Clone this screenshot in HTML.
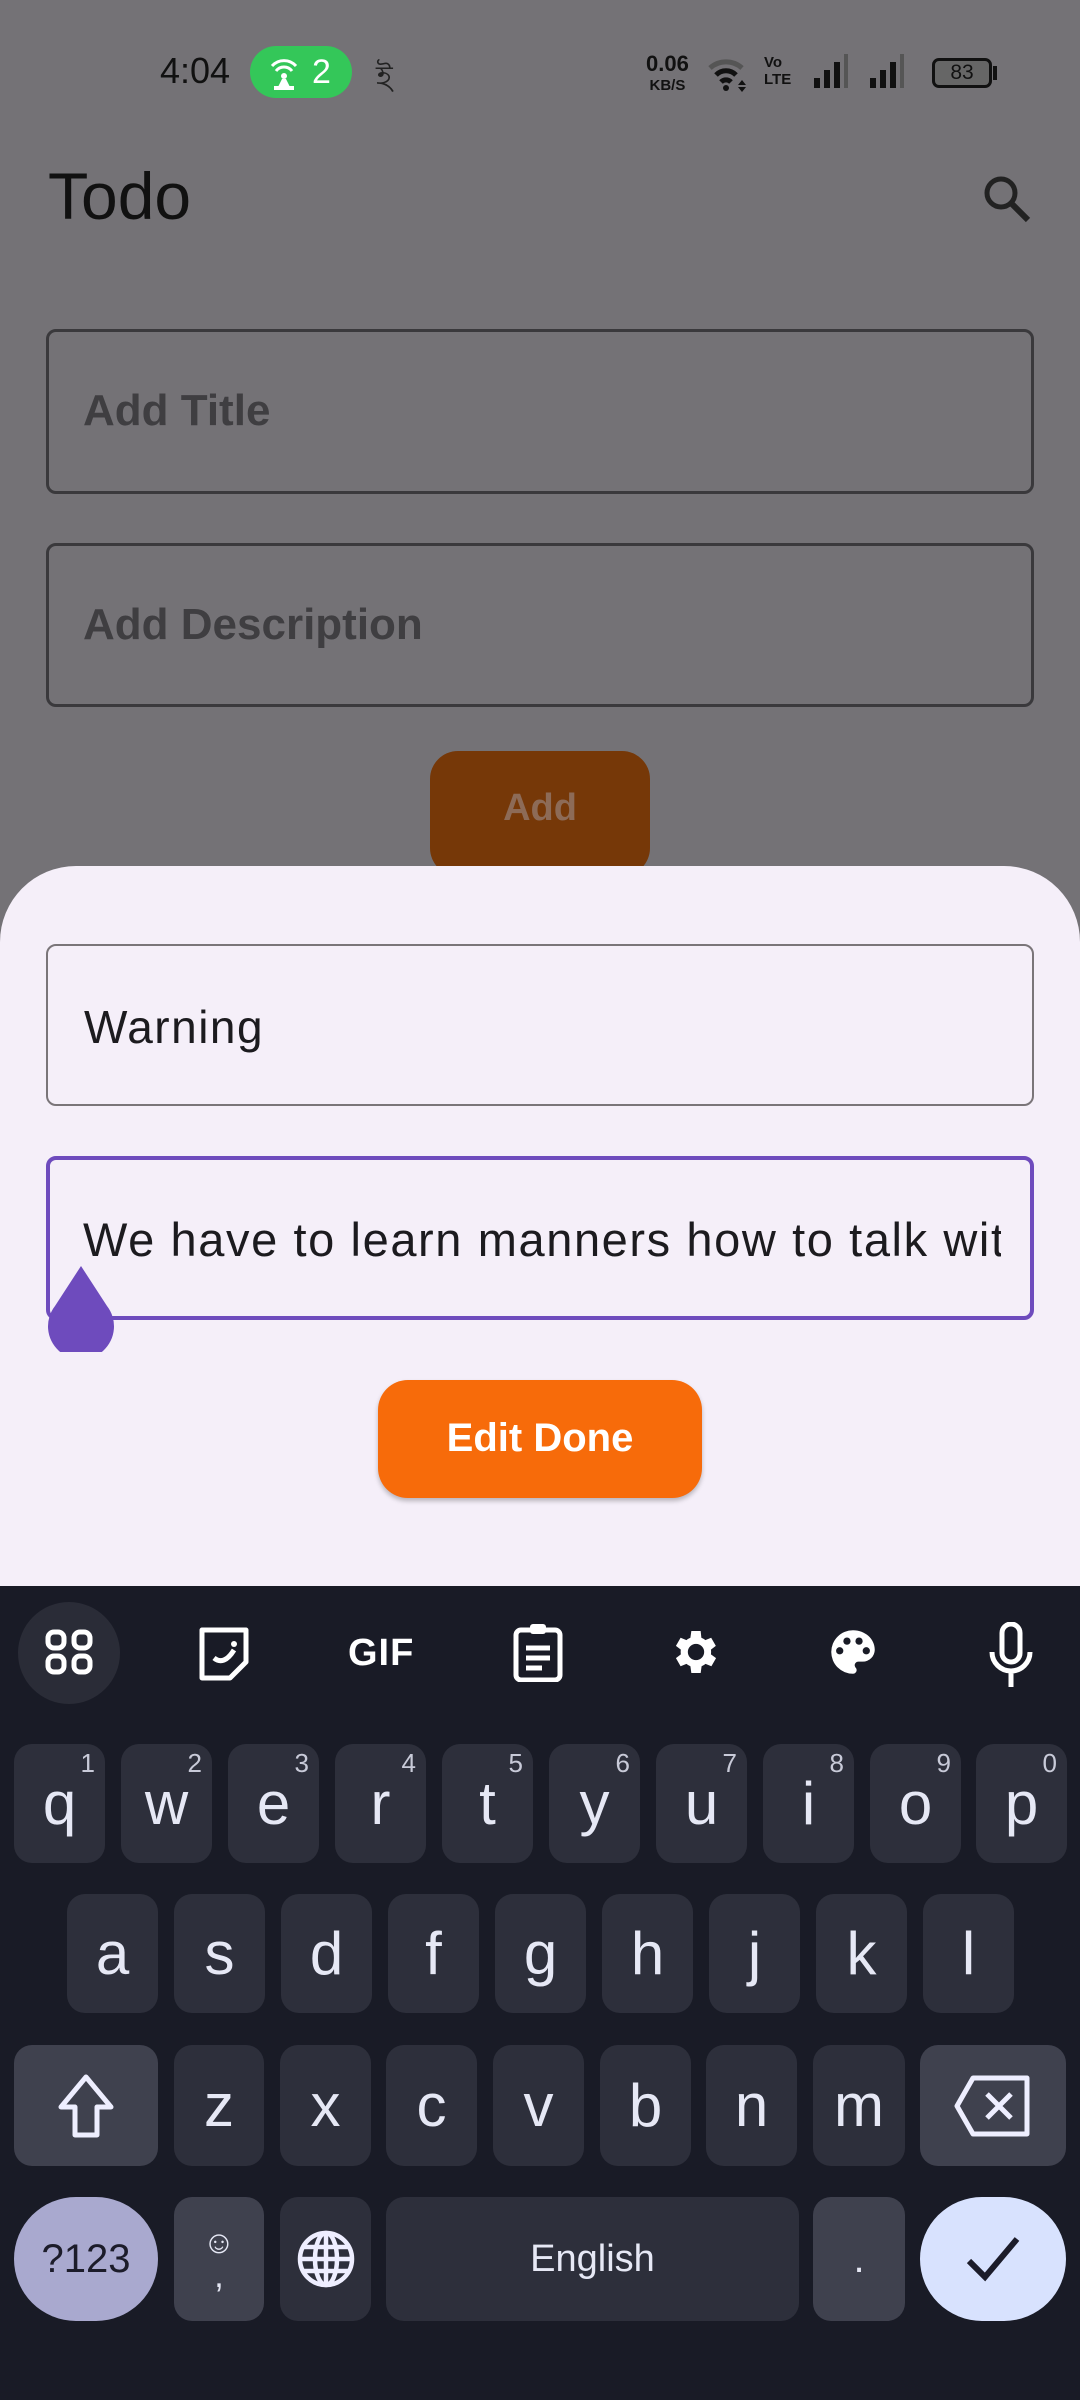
<!DOCTYPE html>
<html><head><meta charset="utf-8"><style>
*{margin:0;padding:0;box-sizing:border-box}
body{width:1080px;height:2400px;overflow:hidden;background:#747276;font-family:"Liberation Sans",sans-serif;position:relative}
.a{position:absolute}
.fld{position:absolute;left:46px;width:988px;border-radius:10px}
.k{position:absolute;background:#2d2f3b;border-radius:18px;color:#e6e8f5;font-size:60px;display:flex;align-items:center;justify-content:center}
.k sup{position:absolute;right:10px;top:4px;font-size:26px;color:#c8cad8}
.ic{position:absolute;top:1622px}
</style></head><body>
<!-- status bar -->
<div class="a" style="left:160px;top:50px;font-size:36px;color:#111">4:04</div>
<div class="a" style="left:250px;top:46px;width:102px;height:52px;border-radius:26px;background:#34c759;color:#fff;font-size:34px;padding:7px 0 0 62px">2</div>
<svg class="a" style="left:266px;top:52px" width="36" height="40" viewBox="0 0 36 40"><path d="M6 14a16 16 0 0 1 24 0M10 19a10 10 0 0 1 16 0" stroke="#fff" stroke-width="3" fill="none"/><circle cx="18" cy="24" r="3" fill="#fff"/><path d="M16 27h4l4 8H12z" fill="#fff"/><rect x="8" y="34" width="20" height="4" fill="#fff"/></svg>
<div class="a" style="left:376px;top:52px;font-size:32px;color:#222">ই</div>
<div class="a" style="left:646px;top:54px;font-size:22px;font-weight:bold;color:#111;line-height:19px;text-align:center">0.06<br><span style="font-size:15px">KB/S</span></div>
<svg class="a" style="left:706px;top:54px" width="44" height="40" viewBox="0 0 44 40"><path d="M4 14a24 24 0 0 1 32 0" stroke="#555" stroke-width="5" fill="none"/><path d="M10 21a14 14 0 0 1 20 0" stroke="#111" stroke-width="5" fill="none"/><path d="M15 28a7 7 0 0 1 10 0" stroke="#111" stroke-width="5" fill="none"/><circle cx="20" cy="34" r="3" fill="#111"/><path d="M36 26l4 5h-8zM36 38l4-5h-8z" fill="#111"/></svg>
<div class="a" style="left:764px;top:54px;font-size:15px;font-weight:bold;color:#111;line-height:17px">Vo<br>LTE</div>
<svg class="a" style="left:812px;top:54px" width="110" height="36"><g fill="#111"><rect x="2" y="24" width="6" height="10"/><rect x="12" y="16" width="6" height="18"/><rect x="22" y="8" width="6" height="26"/><rect x="32" y="0" width="4" height="34" fill="#555"/><rect x="58" y="24" width="6" height="10"/><rect x="68" y="16" width="6" height="18"/><rect x="78" y="8" width="6" height="26"/><rect x="88" y="0" width="4" height="34" fill="#555"/></g></svg>
<div class="a" style="left:932px;top:58px;width:60px;height:30px;border:3px solid #111;border-radius:7px;font-size:21px;text-align:center;line-height:24px;color:#111;background:#666">83</div>
<div class="a" style="left:993px;top:66px;width:4px;height:14px;background:#111"></div>
<!-- app bar -->
<div class="a" style="left:48px;top:158px;font-size:66px;color:#111">Todo</div>
<svg class="a" style="left:980px;top:172px" width="54" height="54" viewBox="0 0 54 54"><circle cx="21" cy="21" r="14" stroke="#222" stroke-width="5" fill="none"/><path d="M31 31l17 17" stroke="#222" stroke-width="6"/></svg>
<div class="fld" style="top:329px;height:165px;border:3px solid #3a393c"><div class="a" style="left:34px;top:54px;font-size:44px;font-weight:bold;color:#3f3e41">Add Title</div></div>
<div class="fld" style="top:543px;height:164px;border:3px solid #3a393c"><div class="a" style="left:34px;top:54px;font-size:44px;font-weight:bold;color:#3f3e41">Add Description</div></div>
<div class="a" style="left:430px;top:751px;width:220px;height:125px;background:#763808;border-radius:28px;color:#8d6b57;font-size:38px;font-weight:bold;text-align:center;padding-top:36px">Add</div>
<!-- sheet -->
<div class="a" style="left:0;top:866px;width:1080px;height:740px;background:#f5eff9;border-radius:76px 76px 0 0"></div>
<div class="fld" style="top:944px;height:162px;border:2px solid #7a7579"><div class="a" style="left:36px;top:54px;font-size:46px;color:#1c1b1f;letter-spacing:1.5px">Warning</div></div>
<div class="fld" style="top:1156px;height:164px;border:4px solid #6e4bbd;overflow:hidden"><div class="a" style="left:33px;top:52px;font-size:47px;color:#1c1b1f;white-space:nowrap;letter-spacing:1.6px;width:918px;overflow:hidden">We have to learn manners how to talk with</div></div>
<svg class="a" style="left:47px;top:1266px" width="68" height="86" viewBox="0 0 68 86"><path d="M34 0L60 40A33 33 0 1 1 8 40Z" fill="#6e4bbd"/></svg>
<div class="a" style="left:378px;top:1380px;width:324px;height:118px;background:#f76b0a;border-radius:30px;color:#fff;font-size:40px;font-weight:bold;text-align:center;padding-top:36px;box-shadow:0 3px 5px rgba(0,0,0,.25)">Edit Done</div>
<!-- keyboard -->
<div class="a" style="left:0;top:1586px;width:1080px;height:814px;background:#191b26"></div>
<div class="a" style="left:18px;top:1602px;width:102px;height:102px;border-radius:50%;background:#2a2c37"></div>
<svg class="ic" style="left:44px" width="52" height="60" viewBox="0 0 52 60"><g fill="none" stroke="#fff" stroke-width="5"><rect x="4" y="10" width="16" height="16" rx="6"/><rect x="30" y="10" width="16" height="16" rx="6"/><rect x="4" y="34" width="16" height="16" rx="6"/><rect x="30" y="34" width="16" height="16" rx="6"/></g></svg>
<svg class="ic" style="left:196px" width="60" height="60" viewBox="0 0 60 60"><path d="M6 8h44v32L34 56H6z" fill="none" stroke="#fff" stroke-width="5" stroke-linejoin="round"/><path d="M18 36q10 8 20-8" stroke="#fff" stroke-width="5" fill="none"/><circle cx="38" cy="22" r="3" fill="#fff"/></svg>
<div class="ic" style="left:348px;top:1632px;font-size:38px;font-weight:900;color:#fff;letter-spacing:1px">GIF</div>
<svg class="ic" style="left:512px" width="52" height="60" viewBox="0 0 52 60"><rect x="4" y="8" width="44" height="50" rx="5" fill="none" stroke="#fff" stroke-width="5"/><rect x="18" y="2" width="16" height="10" rx="3" fill="#fff"/><path d="M14 26h24M14 36h24M14 46h16" stroke="#fff" stroke-width="5"/></svg>
<svg class="ic" style="left:668px" width="56" height="60" viewBox="0 0 24 24"><path fill="#fff" d="M19.4 13a7.5 7.5 0 0 0 0-2l2.1-1.6-2-3.5-2.5 1a7 7 0 0 0-1.7-1L15 3h-4l-.4 2.9a7 7 0 0 0-1.7 1l-2.5-1-2 3.5L6.5 11a7.5 7.5 0 0 0 0 2l-2.1 1.6 2 3.5 2.5-1a7 7 0 0 0 1.7 1L11 21h4l.4-2.9a7 7 0 0 0 1.7-1l2.5 1 2-3.5zM13 15.5a3.5 3.5 0 1 1 0-7 3.5 3.5 0 0 1 0 7z" transform="translate(-1 0)"/></svg>
<svg class="ic" style="left:824px" width="58" height="60" viewBox="0 0 24 24"><path fill="#fff" d="M12 3a9 9 0 0 0 0 18c.8 0 1.5-.7 1.5-1.5 0-.4-.1-.7-.4-1-.2-.3-.4-.6-.4-1 0-.8.7-1.5 1.5-1.5H16a5 5 0 0 0 5-5c0-4.4-4-8-9-8z"/><g fill="#191b26"><circle cx="6.5" cy="11.5" r="1.5"/><circle cx="9.5" cy="7.5" r="1.5"/><circle cx="14.5" cy="7.5" r="1.5"/><circle cx="17.5" cy="11.5" r="1.5"/></g></svg>
<svg class="ic" style="left:984px" width="54" height="66" viewBox="0 0 54 66"><rect x="18" y="2" width="18" height="38" rx="9" fill="none" stroke="#fff" stroke-width="5"/><path d="M8 30a19 19 0 0 0 38 0M27 49v16" stroke="#fff" stroke-width="5" fill="none"/></svg>
<!-- row 1 -->
<div class="k" style="left:14px;top:1744px;width:91px;height:119px">q<sup>1</sup></div>
<div class="k" style="left:121px;top:1744px;width:91px;height:119px">w<sup>2</sup></div>
<div class="k" style="left:228px;top:1744px;width:91px;height:119px">e<sup>3</sup></div>
<div class="k" style="left:335px;top:1744px;width:91px;height:119px">r<sup>4</sup></div>
<div class="k" style="left:442px;top:1744px;width:91px;height:119px">t<sup>5</sup></div>
<div class="k" style="left:549px;top:1744px;width:91px;height:119px">y<sup>6</sup></div>
<div class="k" style="left:656px;top:1744px;width:91px;height:119px">u<sup>7</sup></div>
<div class="k" style="left:763px;top:1744px;width:91px;height:119px">i<sup>8</sup></div>
<div class="k" style="left:870px;top:1744px;width:91px;height:119px">o<sup>9</sup></div>
<div class="k" style="left:976px;top:1744px;width:91px;height:119px">p<sup>0</sup></div>
<!-- row 2 -->
<div class="k" style="left:67px;top:1894px;width:91px;height:119px">a</div>
<div class="k" style="left:174px;top:1894px;width:91px;height:119px">s</div>
<div class="k" style="left:281px;top:1894px;width:91px;height:119px">d</div>
<div class="k" style="left:388px;top:1894px;width:91px;height:119px">f</div>
<div class="k" style="left:495px;top:1894px;width:91px;height:119px">g</div>
<div class="k" style="left:602px;top:1894px;width:91px;height:119px">h</div>
<div class="k" style="left:709px;top:1894px;width:91px;height:119px">j</div>
<div class="k" style="left:816px;top:1894px;width:91px;height:119px">k</div>
<div class="k" style="left:923px;top:1894px;width:91px;height:119px">l</div>
<!-- row 3 -->
<div class="k" style="left:14px;top:2045px;width:144px;height:121px;background:#3f414e"><svg width="70" height="70" viewBox="0 0 70 70"><path d="M35 6L60 36H46v28H24V36H10z" fill="none" stroke="#eef" stroke-width="5" stroke-linejoin="round"/></svg></div>
<div class="k" style="left:174px;top:2045px;width:90px;height:121px">z</div>
<div class="k" style="left:280px;top:2045px;width:91px;height:121px">x</div>
<div class="k" style="left:386px;top:2045px;width:91px;height:121px">c</div>
<div class="k" style="left:493px;top:2045px;width:91px;height:121px">v</div>
<div class="k" style="left:600px;top:2045px;width:91px;height:121px">b</div>
<div class="k" style="left:706px;top:2045px;width:91px;height:121px">n</div>
<div class="k" style="left:813px;top:2045px;width:92px;height:121px">m</div>
<div class="k" style="left:920px;top:2045px;width:146px;height:121px;background:#3f414e"><svg width="80" height="64" viewBox="0 0 80 64"><path d="M20 4h54v56H20L4 32z" fill="none" stroke="#eef" stroke-width="5" stroke-linejoin="round"/><path d="M34 20l24 24M58 20L34 44" stroke="#eef" stroke-width="5"/></svg></div>
<!-- row 4 -->
<div class="k" style="left:14px;top:2197px;width:144px;height:124px;background:#a9a9cf;border-radius:62px;color:#1c1c2a;font-size:40px">?123</div>
<div class="k" style="left:174px;top:2197px;width:90px;height:124px;background:#3f414e;flex-direction:column;font-size:34px;line-height:34px"><span style="font-size:32px">☺</span><span>,</span></div>
<div class="k" style="left:280px;top:2197px;width:91px;height:124px"><svg width="60" height="60" viewBox="0 0 60 60"><g fill="none" stroke="#eef" stroke-width="4.5"><circle cx="30" cy="30" r="26"/><ellipse cx="30" cy="30" rx="11" ry="26"/><path d="M4 30h52M8 18h44M8 42h44M30 4v52"/></g></svg></div>
<div class="k" style="left:386px;top:2197px;width:413px;height:124px;font-size:38px">English</div>
<div class="k" style="left:813px;top:2197px;width:92px;height:124px;background:#3f414e;font-size:40px">.</div>
<div class="k" style="left:920px;top:2197px;width:146px;height:124px;background:#d8e2fe;border-radius:62px"><svg width="60" height="60" viewBox="0 0 60 60"><path d="M6 32l16 16L54 10" fill="none" stroke="#1c1c2a" stroke-width="6"/></svg></div>
</body></html>
